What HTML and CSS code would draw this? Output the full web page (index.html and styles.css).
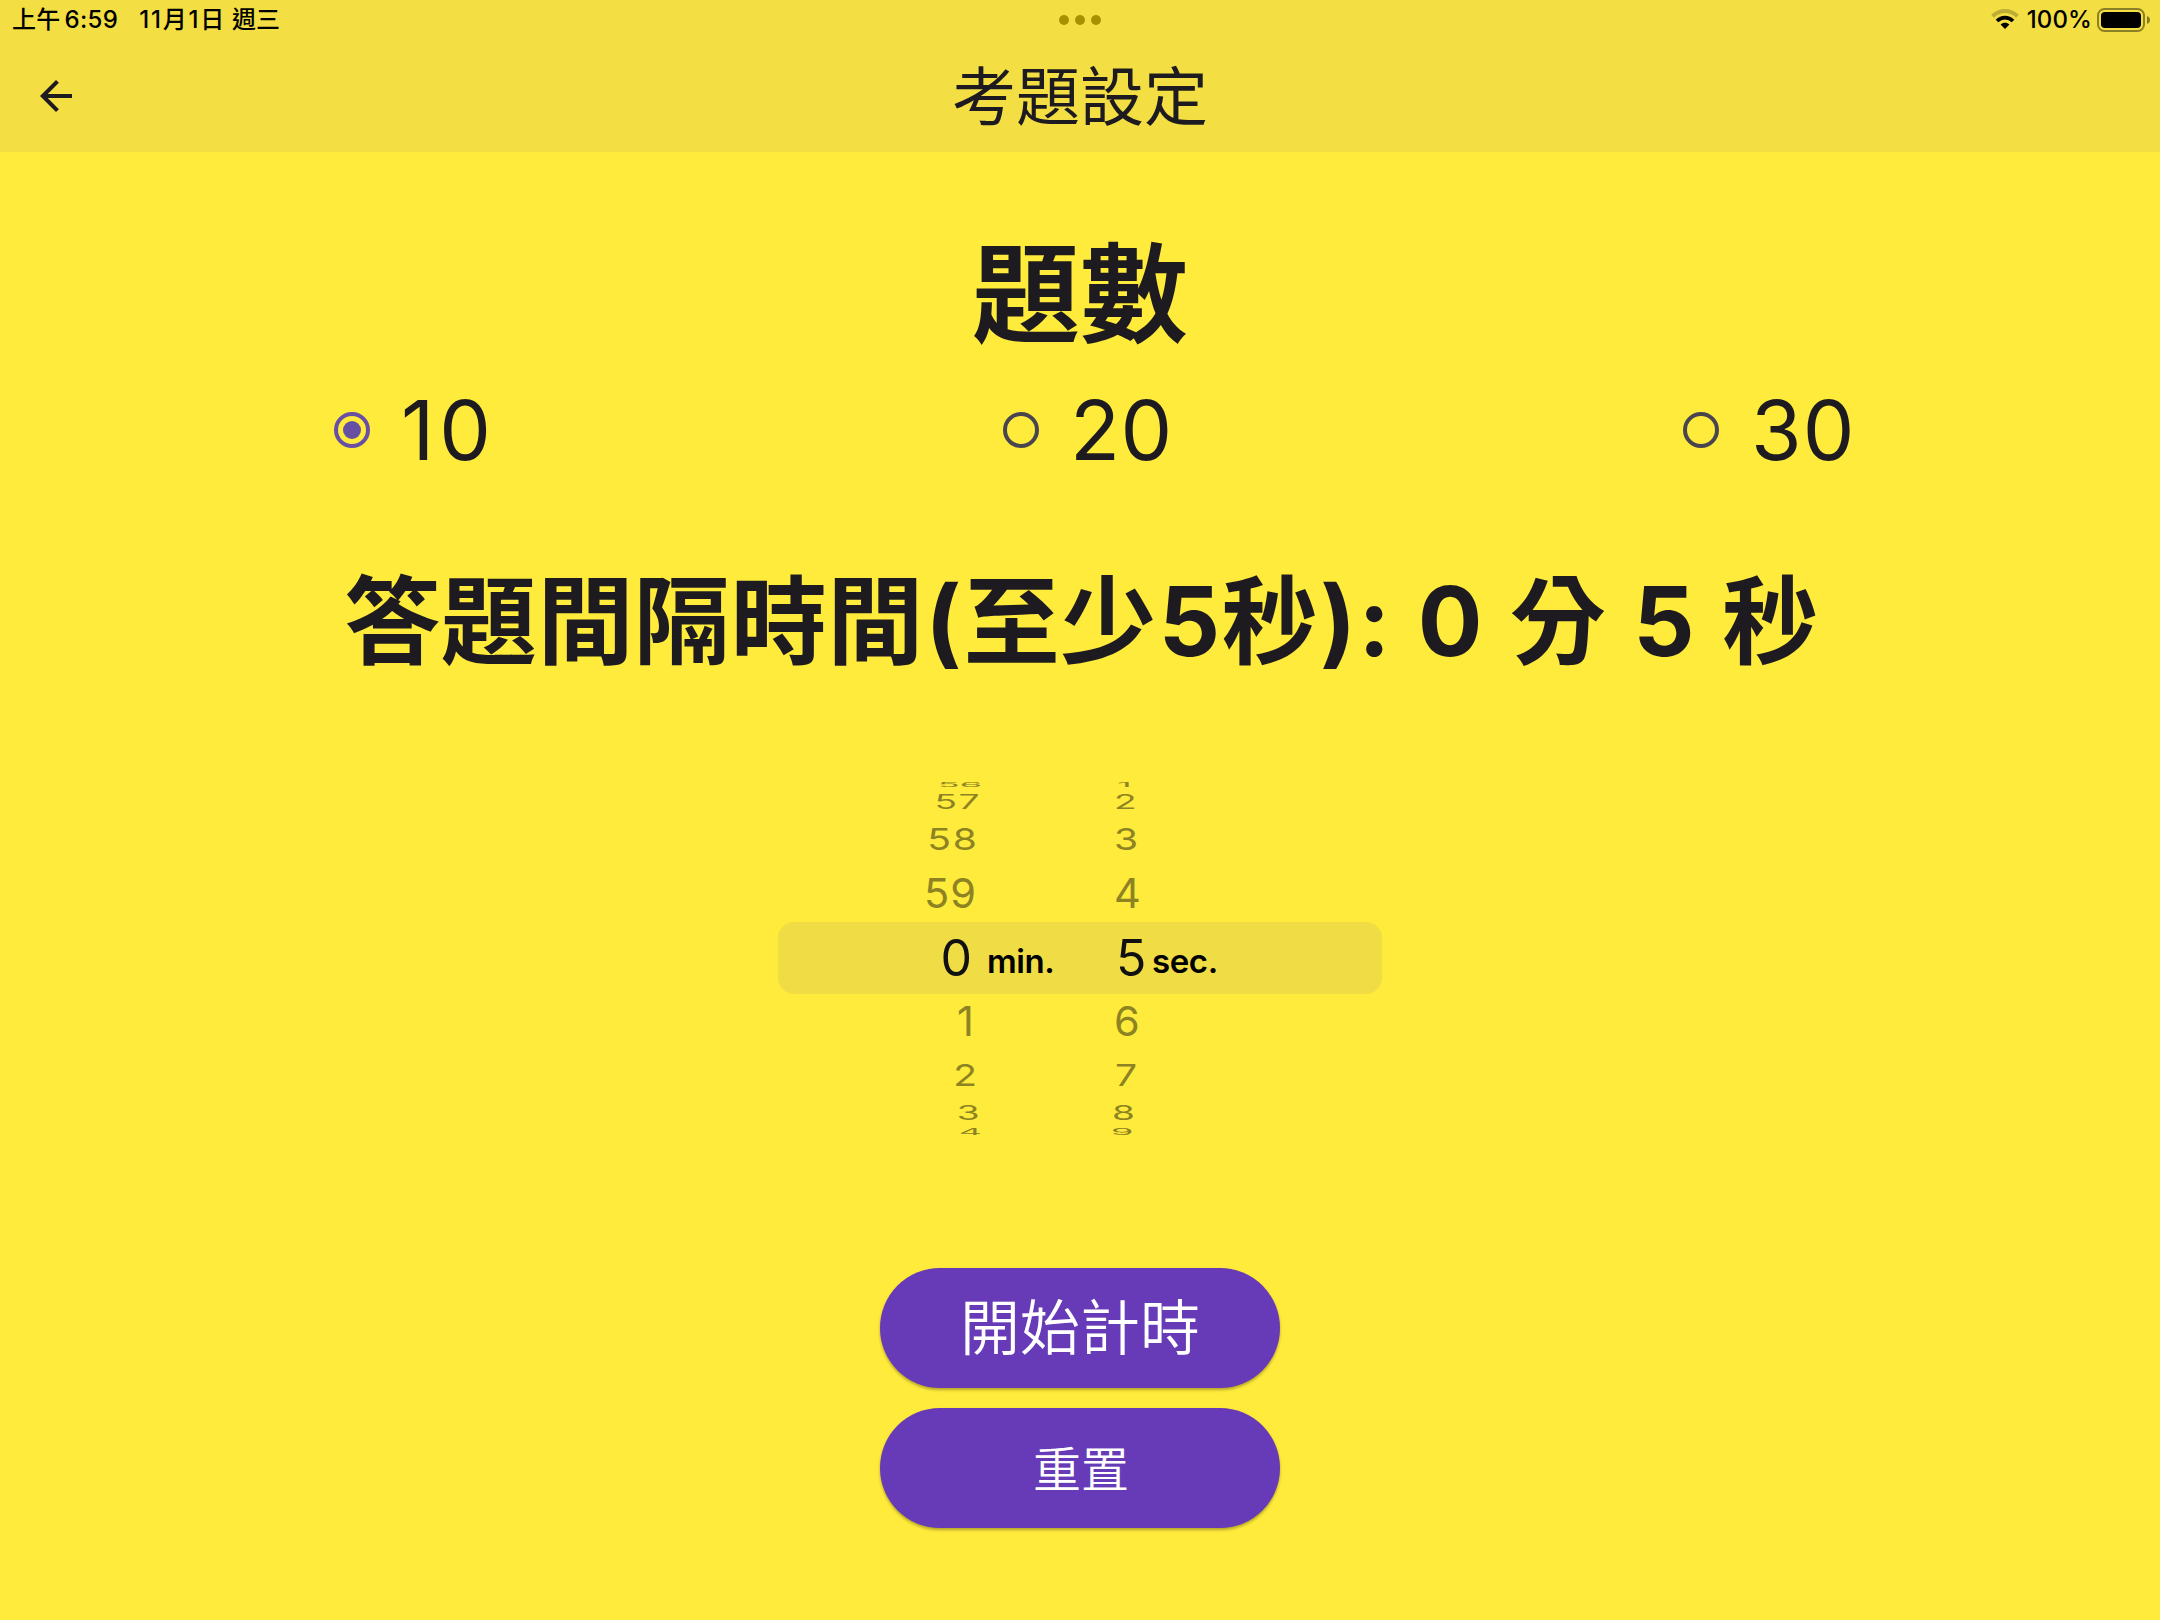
FILE: index.html
```html
<!DOCTYPE html>
<html lang="zh-Hant">
<head>
<meta charset="utf-8">
<title>考題設定</title>
<link rel="stylesheet" href="styles.css">
</head>
<body>
<header class="header">
  <div class="status">
    <div class="status-left">
      <span class="clock"><span class="ampm">上午</span><span>6:59</span></span>
      <span class="date"><span class="day">11月1日</span><span class="weekday">週三</span></span>
    </div>
    <div class="dots"><i></i><i></i><i></i></div>
    <div class="status-right">
      <svg class="wifi" width="28" height="22" viewBox="0 0 28 22">
        <path d="M1.6 7.2C8.8.4 19.2.4 26.4 7.2" fill="none" stroke="#000" stroke-opacity=".22" stroke-width="4"/>
        <path d="M6 12c4.6-4.4 11.4-4.4 16 0" fill="none" stroke="#000" stroke-width="3.8"/>
        <path d="M9.6 15.6c2.5-2.4 6.3-2.4 8.8 0L14 20z"/>
      </svg>
      <span class="percent">100%</span>
      <svg class="battery" width="54" height="24" viewBox="0 0 54 24">
        <rect x="1" y="1" width="46" height="22" rx="6.5" fill="none" stroke="#000" stroke-opacity=".42" stroke-width="2"/>
        <rect x="4" y="4" width="40" height="16" rx="4"/>
        <path d="M50 8c1.8.7 3 2.200 3 4s-1.200 3.300-3 4z" fill-opacity=".45"/>
      </svg>
    </div>
  </div>
  <div class="appbar">
    <svg class="back" width="32" height="32" viewBox="0 0 32 32"><path d="M32 14v4H7.700l11.200 11.200L16 32 0 16 16 0l2.900 2.800L7.700 14z"/></svg>
    <h1 class="title">考題設定</h1>
    <span class="balance"></span>
  </div>
</header>
<main class="main">
  <h2 class="count-title">題數</h2>
  <div class="options">
    <label class="option option-ten"><span class="radio checked"></span><span class="num">10</span></label>
    <label class="option option-twenty"><span class="radio"></span><span class="num">20</span></label>
    <label class="option option-thirty"><span class="radio"></span><span class="num">30</span></label>
  </div>
  <h2 class="interval">答題間隔時間<span class="paren">(</span>至少<span class="least">5</span>秒<span class="paren">)</span>: 0 分 5 秒</h2>
  <div class="picker">
    <div class="wheel wheel-min">
      <span class="row far4"><b>56</b></span>
      <span class="row far3"><b>57</b></span>
      <span class="row far2"><b>58</b></span>
      <span class="row far1"><b>59</b></span>
      <span class="row current"><b>0</b></span>
      <span class="row far1 one"><b>1</b></span>
      <span class="row far2"><b>2</b></span>
      <span class="row far3"><b>3</b></span>
      <span class="row far4"><b>4</b></span>
    </div>
    <span class="unit unit-min">min.</span>
    <div class="wheel wheel-sec">
      <span class="row far4"><b>1</b></span>
      <span class="row far3"><b>2</b></span>
      <span class="row far2"><b>3</b></span>
      <span class="row far1"><b>4</b></span>
      <span class="row current"><b>5</b></span>
      <span class="row far1"><b>6</b></span>
      <span class="row far2"><b>7</b></span>
      <span class="row far3"><b>8</b></span>
      <span class="row far4"><b>9</b></span>
    </div>
    <span class="unit unit-sec">sec.</span>
  </div>
  <div class="actions">
    <button class="btn start">開始計時</button>
    <button class="btn reset">重置</button>
  </div>
</main>
</body>
</html>
```
FILE: styles.css
```css
* { box-sizing: border-box; }
body {
  margin: 0;
  width: 2160px;
  height: 1620px;
  overflow: hidden;
  background: #ffeb3b;
  color: #1d1b20;
  font-family: Inter, "Noto Sans CJK TC", sans-serif;
}
h1, h2 { margin: 0; white-space: nowrap; }

.header { height: 152px; background: #f3de43; }
.status {
  display: grid;
  grid-template-columns: 1fr auto 1fr;
  height: 40px;
  align-items: center;
  color: #000;
  font-size: 24px;
  font-weight: 500;
  line-height: 40px;
}
.status-left { display: flex; padding-left: 12px; gap: 21px; }
.clock { display: flex; gap: 4px; letter-spacing: .3px; }
.date { display: flex; gap: 6px; }
.day { letter-spacing: 1.8px; }
.dots { display: flex; gap: 6px; }
.dots i { width: 10px; height: 10px; border-radius: 50%; background: #a89100; }
.status-right { display: flex; justify-content: flex-end; align-items: center; padding-right: 9px; }
.percent { margin: 0 5px 0 8px; letter-spacing: .1px; }

.appbar { display: flex; align-items: center; justify-content: space-between; height: 112px; padding: 0 40px; }
.back { fill: #1d1b20; }
.title { font-size: 64px; font-weight: 400; line-height: 113px; }
.balance { width: 32px; }

.main { display: flex; flex-direction: column; align-items: center; }
.count-title { margin-top: 73px; font-size: 108px; font-weight: 700; line-height: 140px; }
.options { display: flex; align-self: stretch; height: 131px; align-items: center; padding-left: 334px; }
.option { display: flex; align-items: center; gap: 31px; font-size: 82px; line-height: 100px; }
.option-ten { width: 669px; letter-spacing: 5px; }
.option-twenty { width: 680px; letter-spacing: .5px; }
.option-thirty { gap: 32px; letter-spacing: 1px; }
.radio { display: grid; place-items: center; width: 36px; height: 36px; margin-bottom: 1px; border: 4px solid #49454f; border-radius: 50%; }
.radio.checked { border-color: #6750a4; }
.radio.checked::before { content: ""; width: 18px; height: 18px; border-radius: 50%; background: #6750a4; }
.interval {
  height: 144px;
  margin-top: 53px;
  padding-left: 3px;
  font-size: 96px;
  font-weight: 700;
  line-height: 144px;
  letter-spacing: .6px;
  word-spacing: 3.500px;
}
.paren { margin: 0 1.500px; }
.least { margin: 0 1px 0 2px; }

.picker {
  display: flex;
  width: 604px;
  height: 354px;
  margin-top: 89px;
  position: relative;
  z-index: 0;
}
.picker::before {
  content: "";
  position: absolute;
  z-index: -1;
  inset: 140px 0 142px;
  border-radius: 16px;
  background: #f0dc45;
}
.wheel {
  display: grid;
  grid-template-rows: 6px 29px 46px 60px 68px 60px 50px 26px 9px;
  color: #8e8322;
}
.wheel-min { width: 204px; justify-items: end; }
.wheel-sec { width: 40px; justify-items: start; }
.row { display: flex; align-items: center; line-height: 0; }
.row b { font-weight: 400; }
.far1 { font-size: 41.5px; letter-spacing: 1px; }
.far2 { font-size: 39px; letter-spacing: 2px; }
.far2 b { transform: translateY(-1px) scaleY(.78); }
.far3 { font-size: 37px; letter-spacing: 1.500px; }
.far3 b { transform: translateY(-.5px) scaleY(.53); }
.far4 { font-size: 36px; }
.far4 b { transform: translateY(.5px) scaleY(.23); }
.far4:first-child b { transform: translateY(-.5px) scaleY(.18); }
.current { color: #111; font-size: 50px; }
.current b { transform: translateY(1px); }
.wheel-min .current { padding-right: 10px; }
.wheel-min .far1 { padding-right: 5px; }
.wheel-min .one { padding-right: 7px; }
.wheel-min .far2 { padding-right: 3px; }
.wheel-min .far3 { padding-right: 1px; }
.wheel-sec .row { padding-left: 5px; }
.wheel-sec .current { padding-left: 7px; }
.wheel-sec .far4:first-child { padding-left: 8px; }
.wheel-sec .far2:nth-child(7) { padding-left: 6px; }
.wheel-sec .far3:nth-child(8) { padding-left: 3px; }
.wheel-sec .far4:last-child { padding-left: 2px; }
.unit { height: 72px; margin-top: 140px; color: #000; font-size: 33px; font-weight: 600; line-height: 78px; letter-spacing: -.4px; }
.unit-min { width: 127px; padding-left: 5px; }
.unit-sec { padding-left: 3px; }

.actions { display: flex; flex-direction: column; gap: 20px; margin-top: 132px; }
.btn {
  width: 400px;
  height: 120px;
  padding: 0;
  border: 0;
  border-radius: 60px;
  background: #673ab7;
  color: #fff;
  font-family: inherit;
  font-weight: 350;
  box-shadow: 0 2px 3px rgba(0, 0, 0, .3);
}
.start { padding-bottom: 9px; font-size: 60px; }
.reset { padding: 0 0 4px 2px; font-size: 48px; }
```
